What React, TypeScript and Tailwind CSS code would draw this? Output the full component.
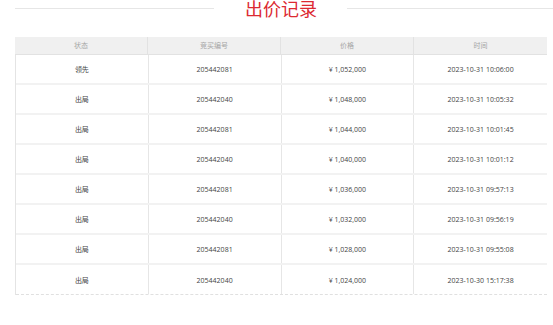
const ROWS = [
  { status: "领先", no: "205442081", price: "¥ 1,052,000", time: "2023-10-31 10:06:00" },
  { status: "出局", no: "205442040", price: "¥ 1,048,000", time: "2023-10-31 10:05:32" },
  { status: "出局", no: "205442081", price: "¥ 1,044,000", time: "2023-10-31 10:01:45" },
  { status: "出局", no: "205442040", price: "¥ 1,040,000", time: "2023-10-31 10:01:12" },
  { status: "出局", no: "205442081", price: "¥ 1,036,000", time: "2023-10-31 09:57:13" },
  { status: "出局", no: "205442040", price: "¥ 1,032,000", time: "2023-10-31 09:56:19" },
  { status: "出局", no: "205442081", price: "¥ 1,028,000", time: "2023-10-31 09:55:08" },
  { status: "出局", no: "205442040", price: "¥ 1,024,000", time: "2023-10-30 15:17:38" },
];

const HEADERS = ["状态", "竞买编号", "价格", "时间"];

export default function App() {
  return (
    <div className="w-[553px] h-[325px] overflow-hidden bg-white font-['Open_Sans','Noto_Sans_CJK_SC',sans-serif]">
      {/* title with rules */}
      <div className="flex items-center h-[17px] pl-[15px]">
        <div className="w-[199px] h-px bg-[#e6e6e6]" />
        <h2 className="ml-[31px] w-[72px] text-[18px] leading-[17px] text-[#dc2a32] whitespace-nowrap font-['Noto_Sans_CJK_SC',sans-serif]">
          出价记录
        </h2>
        <div className="ml-[30px] flex-1 h-px bg-[#e6e6e6]" />
      </div>

      {/* bid table */}
      <div className="ml-[15px] mt-[20px] w-[532px]">
        <div className="grid grid-cols-4 h-[18px] bg-[#f0f0f0] border-b border-[#e2e2e2]">
          {HEADERS.map((h, i) => (
            <div
              key={h}
              className={`flex items-center justify-center pt-px text-[7px] text-[#a6a6a6] ${
                i < 3 ? "border-r border-[#e2e2e2]" : ""
              }`}
            >
              {h}
            </div>
          ))}
        </div>
        <div className="border-l border-[#e4e4e4]">
          {ROWS.map((r, idx) => {
            const last = idx === ROWS.length - 1;
            return (
              <div
                key={idx}
                className={`grid grid-cols-4 h-[30px] ${
                  last ? "border-b border-dashed border-[#e0e0e0]" : "border-b-2 border-[#f2f2f2]"
                }`}
              >
                {[r.status, r.no, r.price, r.time].map((v, i) => (
                  <div
                    key={i}
                    className={`flex items-center justify-center pt-[3px] text-[7px] text-[#444] whitespace-nowrap ${
                      i < 3 ? "border-r border-[#e6e6e6]" : ""
                    }`}
                  >
                    {v}
                  </div>
                ))}
              </div>
            );
          })}
        </div>
      </div>
    </div>
  );
}
